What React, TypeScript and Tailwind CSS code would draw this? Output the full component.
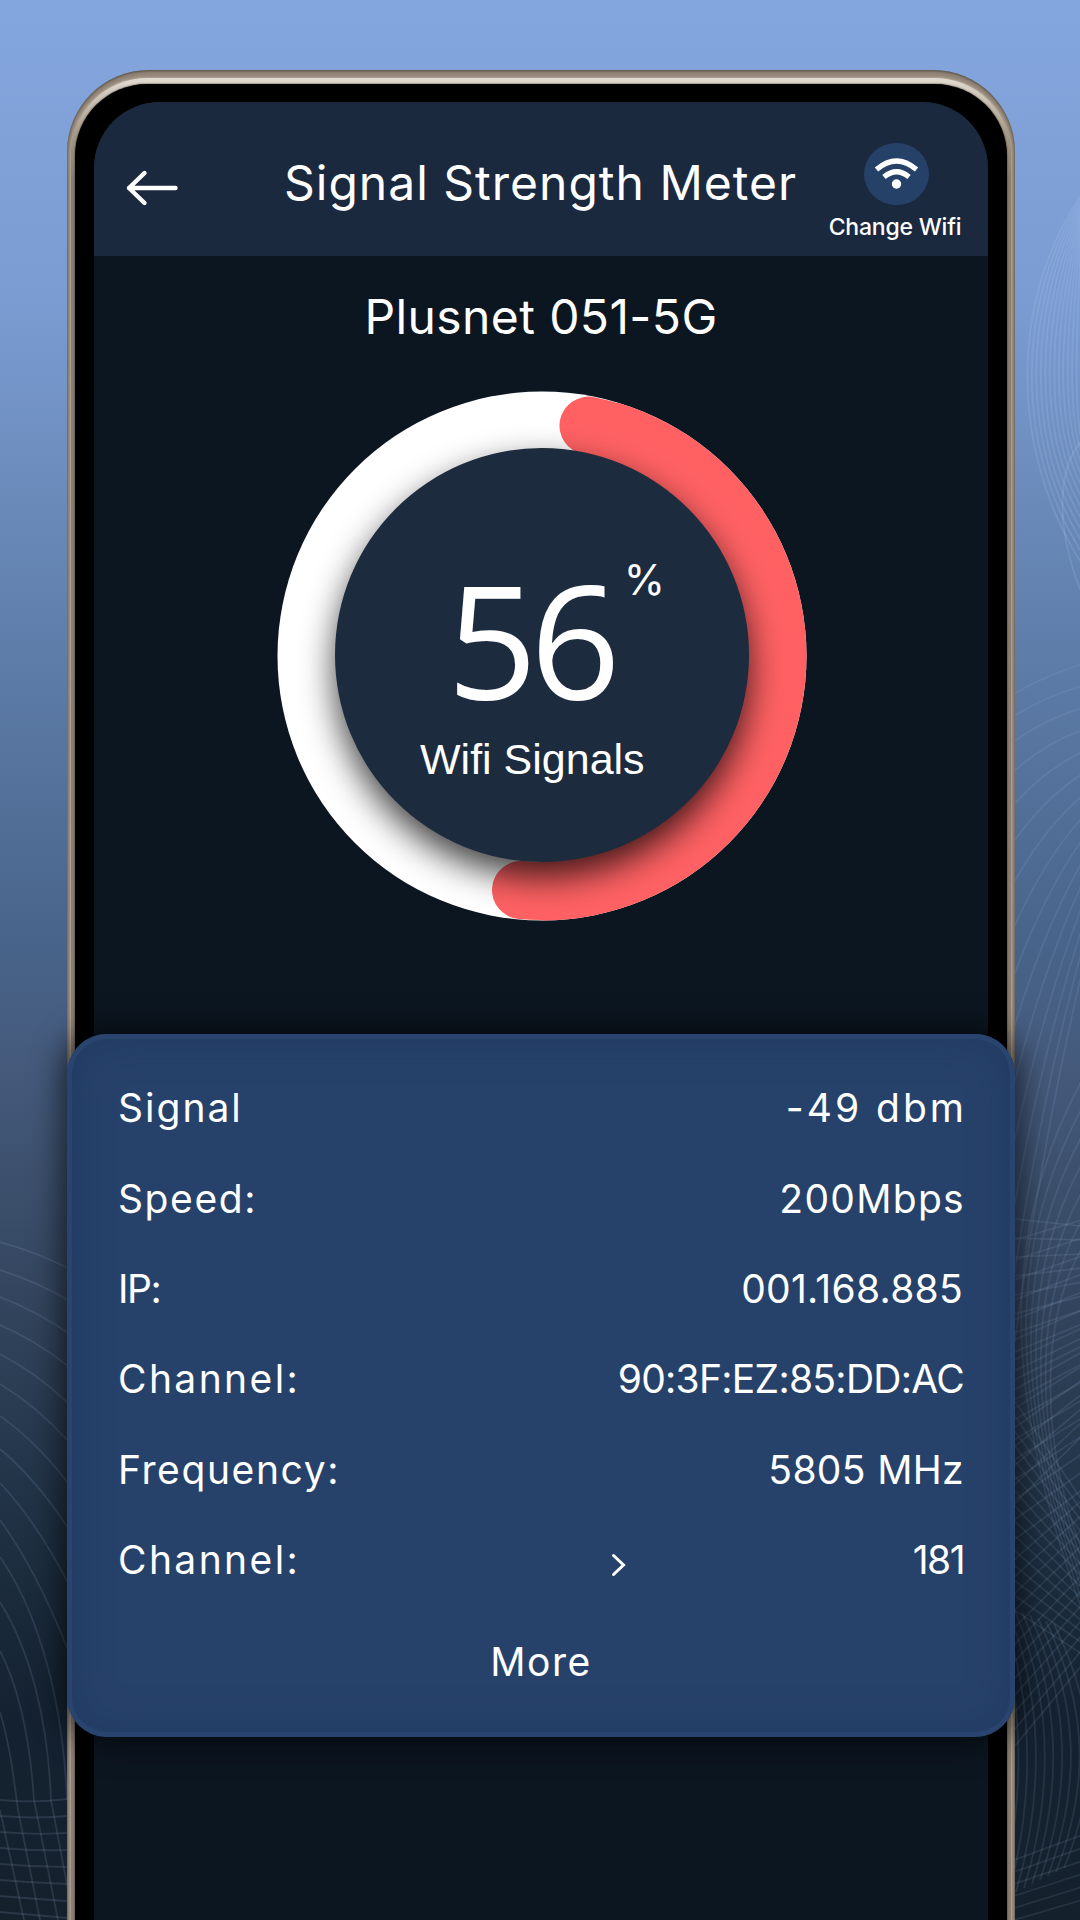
const rows = [
  { label: "Signal", labelStyle: "tracking-[2px]", value: "-49 dbm", valueStyle: "tracking-[3px] -mr-[3px]" },
  { label: "Speed:", labelStyle: "tracking-[1.6px]", value: "200Mbps", valueStyle: "tracking-[1.3px] -mr-[1px]" },
  { label: "IP:", labelStyle: "tracking-[-1.4px]", value: "001.168.885", valueStyle: "tracking-[0.3px] mr-[1px]" },
  { label: "Channel:", labelStyle: "tracking-[2.4px]", value: "90:3F:EZ:85:DD:AC", valueStyle: "tracking-[-0.7px]" },
  { label: "Frequency:", labelStyle: "tracking-[1.6px]", value: "5805 MHz", valueStyle: "tracking-[0.35px]" },
  { label: "Channel:", labelStyle: "tracking-[2.4px]", value: "181", valueStyle: "tracking-[-1.5px]", arrow: true },
];

// start and end heights of the arcs on the left edge
const leftArcs = [
  [1242, 1268], [1270, 1300], [1297, 1333], [1325, 1366], [1354, 1403],
  [1384, 1441], [1416, 1483], [1449, 1528], [1483, 1583], [1520, 1650],
];

const range = (n: number) => Array.from({ length: n }, (_, i) => i);

const Backdrop = () => (
  <svg
    className="absolute inset-0"
    width="1080"
    height="1920"
    viewBox="0 0 1080 1920"
    fill="none"
    strokeWidth="1.8"
  >
    <g stroke="#9fb6d6" strokeOpacity="0.15">
      {leftArcs.map(([a, b]) => (
        <path key={a} d={`M0 ${a}Q36 ${a + (b - a) * 0.38} 68 ${b}`} />
      ))}
      <path d="M0 1557C30 1600 62 1680 67 1800" />
      <path d="M0 1602C30 1650 48 1720 51 1800L68 1890" />
      <path d="M0 1651C20 1690 30 1740 34 1800L58 1920" />
      <path d="M0 1712C10 1745 14 1780 18 1810L40 1920" />
      <path d="M0 1810L24 1920" />
      {range(8).map((i) => (
        <path key={i} d={`M0 ${1800 + i * 16}Q34 ${1803 + i * 16} 68 ${1799 + i * 17}`} />
      ))}
    </g>
    <g stroke="#b4cdf2" strokeOpacity="0.18">
      {range(12).map((i) => (
        <path
          key={i}
          d={`M1082 ${194 + i * 3}C${1009 + i * 6} ${300 + i * 4} ${1009 + i * 6} ${450 - i * 3} 1082 ${564 - i * 11}`}
        />
      ))}
      <path d="M1082 440C1056 470 1056 530 1082 594" />
    </g>
    <g stroke="#a3bbdd" strokeOpacity="0.13">
      {range(15).map((i) => (
        <path
          key={i}
          d={`M1014 ${694 + i * 20 + i * i * 1.9}Q1044 ${676 + i * 20 + i * i * 0.9} 1082 ${664 + i * 22}`}
        />
      ))}
      {range(16).map((i) => (
        <path key={i} d={`M1014 ${1219 + i * 19}L1082 ${1226 + i * 14}`} />
      ))}
      {range(16).map((i) => (
        <path key={i} d={`M1014 ${1240 + i * 20}L1082 ${1220 + i * 18}`} />
      ))}
    </g>
    <g stroke="#a3bbdd" strokeOpacity="0.12">
      {range(7).map((i) => (
        <path
          key={i}
          d={`M1082 ${1080 + i * 28}C${996 + i * 7} ${1240 + i * 14} ${1006 + i * 6} ${1400 + i * 8} 1082 ${1610 - i * 10}`}
        />
      ))}
      {range(15).map((i) => (
        <path key={i} d={`M1014 ${1400 + i * 15}L1082 ${1500 + i * 11}`} />
      ))}
      {range(12).map((i) => (
        <path key={i} d={`M1014 ${1560 + i * 17}L1082 ${1500 + i * 15}`} />
      ))}
      {range(9).map((i) => (
        <path
          key={i}
          d={`M${990 + i * 8} ${1600 + i * 3}C${1026 + i * 9} ${1690 + i * 3} ${1026 + i * 9} ${1800 - i * 2} ${1000 + i * 8} ${1900 - i * 4}`}
        />
      ))}
      {range(6).map((i) => (
        <path key={i} d={`M1014 ${1860 + i * 12}L1082 ${1835 + i * 13}`} />
      ))}
    </g>
  </svg>
);

const BackArrow = () => (
  <svg width="54" height="40" viewBox="0 0 54 40" fill="none" stroke="#fff" strokeWidth="4.4" strokeLinecap="round" strokeLinejoin="round">
    <path d="M50.5 20H4M19.5 5L4 20L19.5 35" />
  </svg>
);

const WifiIcon = () => (
  <svg className="ml-[2px]" width="65" height="62" viewBox="0 0 65 62" fill="none" stroke="#fff">
    <ellipse cx="32.5" cy="31" rx="32.5" ry="31" fill="#264168" stroke="none" />
    <path d="M12.5 26.5Q32.5 9.5 52.5 26.5" strokeWidth="5.2" />
    <path d="M20 34Q32.5 23.5 45 34" strokeWidth="5.2" />
    <circle cx="32.5" cy="41" r="4.7" fill="#fff" stroke="none" />
  </svg>
);

const Gauge = () => (
  <div className="grid w-[540px] h-[540px] ml-[2px]">
    <svg className="[grid-area:1/1]" width="540" height="540" viewBox="-270 -270 540 540" fill="none">
      <defs>
        <clipPath id="ring">
          <circle r="264.5" />
        </clipPath>
        <filter id="soft" x="-30%" y="-30%" width="160%" height="160%">
          <feGaussianBlur stdDeviation="17" />
        </filter>
      </defs>
      <circle r="264.5" fill="#fff" />
      <g clipPath="url(#ring)">
        <path
          d="M46.5 -230.4A235 235 0 0 1 -21 234"
          stroke="#ff6163"
          strokeWidth="58"
          strokeLinecap="round"
        />
        {/* thin closing strip so no white shows past the red arc */}
        <path d="M60 -199A208 208 0 0 1 0 208" stroke="#ff6163" strokeWidth="6" />
        <path d="M75 -253.5A264.5 264.5 0 0 1 0 264.5" stroke="#ff6163" strokeWidth="4" />
        <circle cy="14" r="207" fill="#000" fillOpacity="0.75" filter="url(#soft)" />
      </g>
      <circle cy="-1" r="207" fill="#1c2b3e" />
    </svg>
    <div className="[grid-area:1/1] z-10 text-white pt-[163px]">
      <div className="flex items-start ml-[175px] h-[185px]">
        <span className="font-['Open_Sans'] text-[158px] leading-[178px] tracking-[-7px]">56</span>
        <span className="font-[Inter] text-[42px] leading-[50px] ml-[10px] mt-[6px]">%</span>
      </div>
      <p className="font-['Liberation_Sans'] text-[43px] leading-[50px] ml-[148px]">Wifi Signals</p>
    </div>
  </div>
);

const App = () => {
  return (
    <div className="relative w-[1080px] h-[1920px] overflow-hidden font-[Inter,sans-serif] text-white pl-[67px] pr-[65px] pt-[70px] bg-[linear-gradient(180deg,#84a6de_0px,#7b9cd2_300px,#6585b3_560px,#48648a_940px,#44597a_1080px,#34465f_1290px,#1e3042_1530px,#142130_1720px,#14212d_1920px)]">
      <Backdrop />
      <div className="relative h-[1900px] rounded-t-[82px] bg-[#948779] shadow-[inset_0_1px_3px_#4b463f] pt-[8px] px-[4px]">
        <div className="h-full rounded-t-[76px] bg-[linear-gradient(180deg,#e2dbd0_0px,#a39583_60px,#8b7d70_100px)] shadow-[0_0_3px_#cfc6b8] pt-[6px] px-[4px]">
          <div className="h-full rounded-t-[72px] bg-black shadow-[0_0_2px_#2a2622] pt-[18px] pl-[19px] pr-[19px]">
            <div className="h-full rounded-t-[66px] bg-[#0c1621] flex flex-col items-center">
              <header className="w-full h-[154px] rounded-t-[66px] bg-[#1b293e] flex items-start shrink-0">
                <div className="ml-[31px] mt-[66px]">
                  <BackArrow />
                </div>
                <h1 className="ml-[105px] mt-[51px] w-[544px] text-[48px] leading-[60px] tracking-[1px] whitespace-nowrap">
                  Signal Strength Meter
                </h1>
                <button className="mt-[41px] w-[134px] flex flex-col items-center">
                  <WifiIcon />
                  <span className="text-[23px] leading-[28px] mt-[8px] font-medium tracking-[-0.2px] whitespace-nowrap">
                    Change Wifi
                  </span>
                </button>
              </header>
              <h2 className="mt-[31px] mb-[39px] text-[48px] leading-[60px] tracking-[0.4px]">Plusnet 051-5G</h2>
              <Gauge />
              <section className="mt-[108px] w-[948px] h-[703px] shrink-0 rounded-[40px] bg-[#27426a] pt-[29.5px] text-[39px] shadow-[0_0_30px_6px_rgba(0,0,0,0.6),inset_0_0_0_5px_#29456f,inset_0_0_40px_6px_rgba(20,46,84,0.35)]">
                {rows.map((row, i) => (
                  <div key={i} className="flex items-center h-[90.3px] pl-[51px] pr-[51px]">
                    <span className={`w-[493px] ${row.labelStyle}`}>{row.label}</span>
                    {row.arrow && (
                      <svg className="mt-[9px]" width="16" height="24" viewBox="0 0 16 24" fill="none" stroke="#fff" strokeWidth="3" strokeLinecap="round">
                        <path d="M2.5 2.5L12.5 12L2.5 21.5" />
                      </svg>
                    )}
                    <span className={`ml-auto whitespace-nowrap ${row.valueStyle}`}>{row.value}</span>
                  </div>
                ))}
                <button className="block mx-auto h-[114px] tracking-[1.5px]">More</button>
              </section>
            </div>
          </div>
        </div>
      </div>
    </div>
  );
};

export default App;
